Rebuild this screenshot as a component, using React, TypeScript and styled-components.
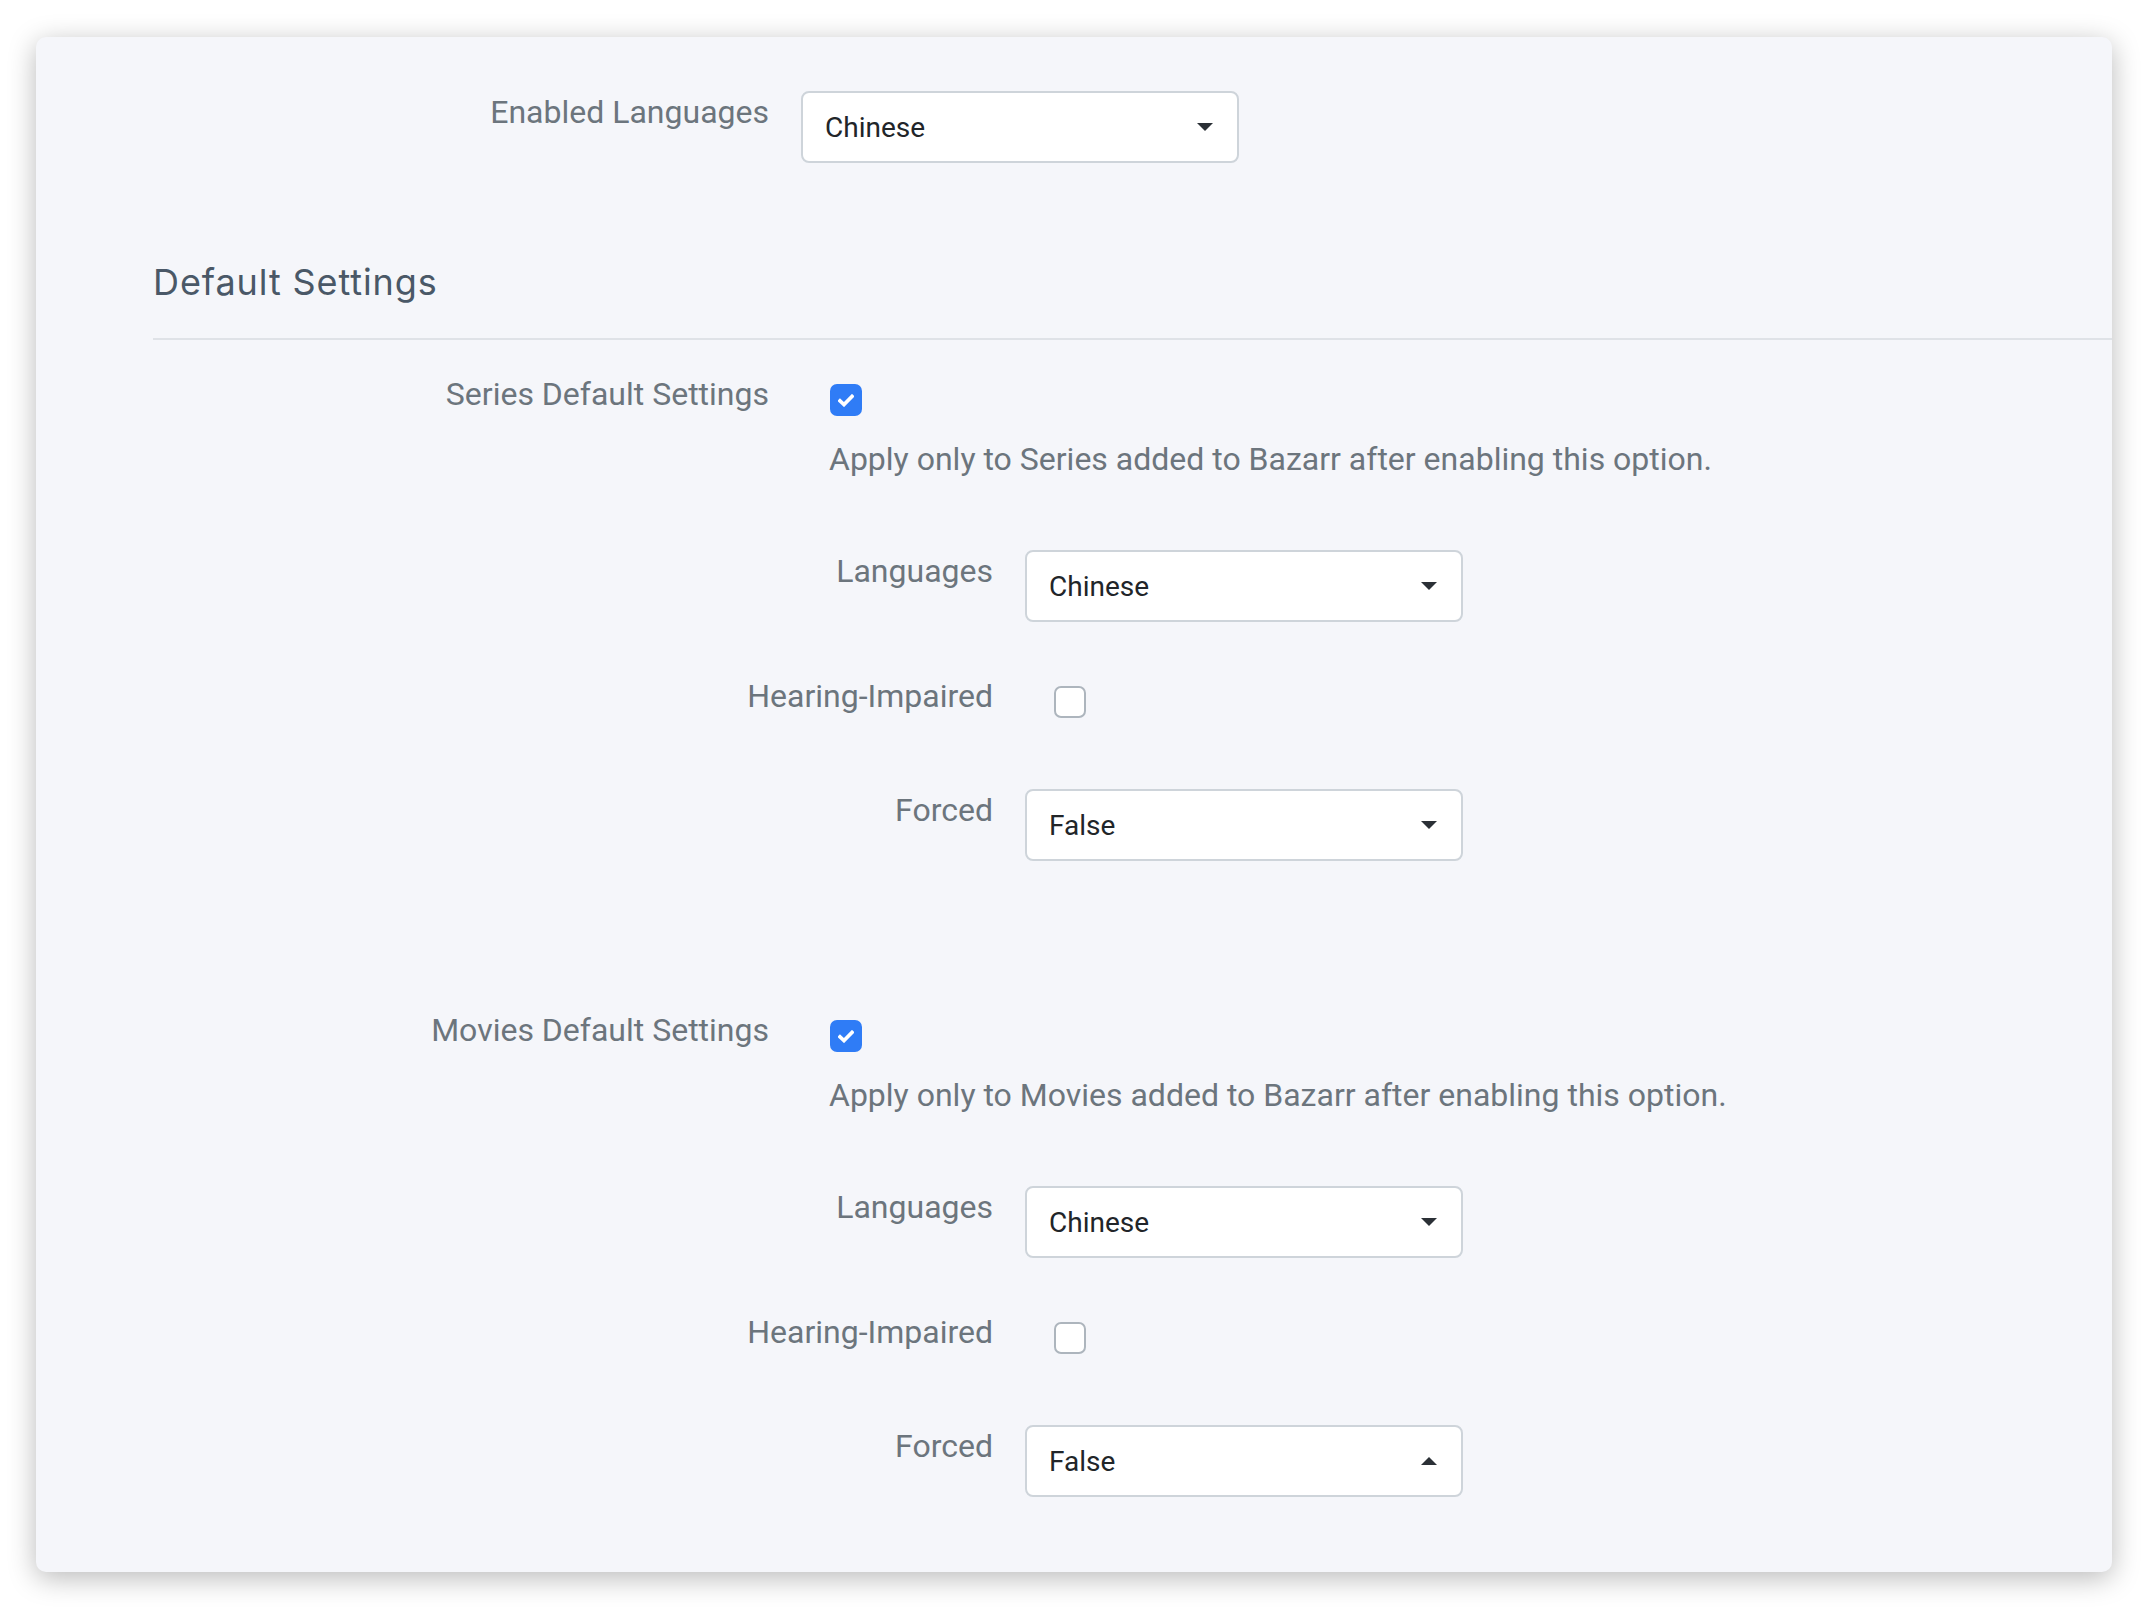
import React from "react"
import styled, { createGlobalStyle } from "styled-components"

const LABEL_COLOR = "#6c757d"
const TEXT_COLOR = "#212529"
const BORDER_COLOR = "#ced4da"
const BLUE_COLOR = "#2f7cf6"
const HEADING_COLOR = "#4a5867"

const GlobalStyle = createGlobalStyle`
  html, body {
    background: #ffffff;
    margin: 0;
    padding: 0;
  }

  body {
    font-family: Roboto, "Liberation Sans", sans-serif;
  }
`

const Page = styled.div`
  padding: 37px 36px 36px 36px;
`

const Card = styled.div`
  background: #f5f6fa;
  border-radius: 10px;
  box-shadow: 0 6px 28px rgba( 0, 0, 0, 0.28 );
  box-sizing: border-box;
  display: flex;
  flex-direction: column;
  padding: 54px 0 75px 117px;
  width: 2076px;
`

const FormRow = styled.div<{ $top?: number }>`
  align-items: flex-start;
  display: flex;
  gap: 32px;
  margin-top: ${ ( p ) => p.$top ?? 0 }px;
`

// long labels spill to the left, like a right aligned column
const FormLabel = styled.label<{ $width: number }>`
  color: ${ LABEL_COLOR };
  display: flex;
  flex: 0 0 ${ ( p ) => p.$width }px;
  font-size: 32px;
  justify-content: flex-end;
  line-height: 42px;
  min-width: 0;
  white-space: nowrap;
`

const FormControlColumn = styled.div`
  display: flex;
  flex: 1;
  flex-direction: column;
`

const SelectBox = styled.div`
  align-items: center;
  background: #ffffff;
  border: 2px solid ${ BORDER_COLOR };
  border-radius: 8px;
  box-sizing: border-box;
  color: ${ TEXT_COLOR };
  display: flex;
  font-size: 28px;
  height: 72px;
  justify-content: space-between;
  padding: 0 24px 0 22px;
  width: 438px;
`

const SelectCaret = styled.svg`
  display: block;
  fill: #2b3036;
  height: 8px;
  width: 16px;
`

const CheckboxHolder = styled.div`
  display: flex;
  padding: 11px 0 0 29px;
`

const CheckboxBox = styled.div<{ $checked: boolean }>`
  align-items: center;
  background: ${ ( p ) => p.$checked ? BLUE_COLOR : "#ffffff" };
  border: ${ ( p ) => p.$checked ? "none" : "2px solid #adb5bd" };
  border-radius: 7px;
  box-sizing: border-box;
  display: flex;
  height: 32px;
  justify-content: center;
  width: 32px;
`

const HelpText = styled.div`
  color: ${ LABEL_COLOR };
  font-size: 32px;
  line-height: 42px;
  margin-top: 22px;
  padding-left: 28px;
  white-space: nowrap;
`

const NestedGroup = styled.div`
  display: flex;
  flex-direction: column;
  margin-top: 70px;
`

const SectionHeading = styled.div`
  color: ${ HEADING_COLOR };
  font-family: Inter, "Open Sans", sans-serif;
  font-size: 36px;
  letter-spacing: 0.9px;
  line-height: 43px;
  margin-top: 98px;
`

const SectionDivider = styled.div`
  background: #dfe2e7;
  height: 2px;
  margin-top: 34px;
`

const Select: React.FunctionComponent<{ value: string, open?: boolean }> = ( { value, open } ) => (
  <SelectBox>
    <span>{ value }</span>
    <SelectCaret viewBox="0 0 16 8">
      { open ? <polygon points="0,8 16,8 8,0" /> : <polygon points="0,0 16,0 8,8" /> }
    </SelectCaret>
  </SelectBox>
)

const Checkbox: React.FunctionComponent<{ checked: boolean }> = ( { checked } ) => (
  <CheckboxBox $checked={ checked }>
    {
      checked && (
        <svg width="16" height="13" viewBox="0 0 16 13">
          <path d="M2 6.8 L6 10.6 L14 2.4" fill="none" stroke="#ffffff" strokeWidth="3.6" strokeLinecap="square" />
        </svg>
      )
    }
  </CheckboxBox>
)

const DefaultSettingsBlock: React.FunctionComponent<{ title: string, kind: string, top: number, forcedOpen?: boolean }> = ( { title, kind, top, forcedOpen } ) => (
  <FormRow $top={ top }>
    <FormLabel $width={ 616 }>{ title }</FormLabel>
    <FormControlColumn>
      <CheckboxHolder>
        <Checkbox checked />
      </CheckboxHolder>
      <HelpText>Apply only to { kind } added to Bazarr after enabling this option.</HelpText>
      <NestedGroup>
        <FormRow>
          <FormLabel $width={ 192 }>Languages</FormLabel>
          <Select value="Chinese" />
        </FormRow>
        <FormRow $top={ 53 }>
          <FormLabel $width={ 192 }>Hearing-Impaired</FormLabel>
          <CheckboxHolder>
            <Checkbox checked={ false } />
          </CheckboxHolder>
        </FormRow>
        <FormRow $top={ 71 }>
          <FormLabel $width={ 192 }>Forced</FormLabel>
          <Select value="False" open={ forcedOpen } />
        </FormRow>
      </NestedGroup>
    </FormControlColumn>
  </FormRow>
)

const App: React.FunctionComponent = () => (
  <Page>
    <GlobalStyle />
    <Card>
      <FormRow>
        <FormLabel $width={ 616 }>Enabled Languages</FormLabel>
        <Select value="Chinese" />
      </FormRow>
      <SectionHeading>Default Settings</SectionHeading>
      <SectionDivider />
      <DefaultSettingsBlock title="Series Default Settings" kind="Series" top={ 33 } />
      <DefaultSettingsBlock title="Movies Default Settings" kind="Movies" top={ 148 } forcedOpen />
    </Card>
  </Page>
)

export default App
